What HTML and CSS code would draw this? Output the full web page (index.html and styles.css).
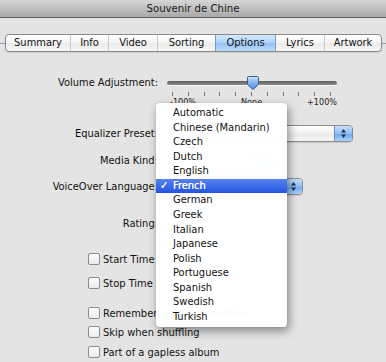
FILE: index.html
```html
<!DOCTYPE html>
<html>
<head>
<meta charset="utf-8">
<link rel="stylesheet" href="styles.css">
</head>
<body>
<div class="window">
  <div class="titlebar">Souvenir de Chine</div>
  <div class="tabrow">
    <div class="stub stub-l"></div>
    <div class="tabs">
      <div class="tab w-summary">Summary</div>
      <div class="tab w-info">Info</div>
      <div class="tab w-video">Video</div>
      <div class="tab w-sorting">Sorting</div>
      <div class="tab tab-sel w-options">Options</div>
      <div class="tab w-lyrics">Lyrics</div>
      <div class="tab w-artwork">Artwork</div>
    </div>
    <div class="stub stub-r"></div>
  </div>

  <div class="content">
    <div class="row-volume">
      <div class="lbl lbl-vol">Volume Adjustment:</div>
      <div class="slider-col">
        <div class="track-area">
          <div class="track"></div>
          <svg class="knob" width="12" height="14" viewBox="0 0 12 14">
            <defs>
              <linearGradient id="kg" x1="0" y1="0" x2="0" y2="1">
                <stop offset="0" stop-color="#cfe4fb"/>
                <stop offset="0.5" stop-color="#7fb2ee"/>
                <stop offset="1" stop-color="#4a8de4"/>
              </linearGradient>
            </defs>
            <path d="M1.5 0.5 H10.5 Q11.5 0.5 11.5 1.5 V8.5 L6 13.5 L0.5 8.5 V1.5 Q0.5 0.5 1.5 0.5 Z" fill="url(#kg)" stroke="#3b5f8f" stroke-width="1"/>
          </svg>
        </div>
        <div class="ticks">
          <i></i><i></i><i></i><i></i><i></i><i></i><i></i><i></i><i></i><i></i><i></i>
        </div>
        <div class="tick-labels">
          <span>-100%</span><span>None</span><span>+100%</span>
        </div>
      </div>
    </div>

    <div class="row row-eq">
      <div class="lbl">Equalizer Preset:</div>
      <div class="popup popup-eq">
        <div class="popup-field"></div>
        <div class="stepper">
          <svg width="7" height="11" viewBox="0 0 7 11"><path d="M3.5 1 L6 4.5 H1 Z M3.5 10 L6 6.5 H1 Z" fill="#1d2f52"/></svg>
        </div>
      </div>
    </div>

    <div class="row row-media">
      <div class="lbl">Media Kind:</div>
      <div class="popup popup-media">
        <div class="popup-field"></div>
        <div class="stepper">
          <svg width="7" height="11" viewBox="0 0 7 11"><path d="M3.5 1 L6 4.5 H1 Z M3.5 10 L6 6.5 H1 Z" fill="#1d2f52"/></svg>
        </div>
      </div>
    </div>

    <div class="row row-voice">
      <div class="lbl">VoiceOver Language:</div>
      <div class="popup popup-voice">
        <div class="popup-field"></div>
        <div class="stepper">
          <svg width="7" height="11" viewBox="0 0 7 11"><path d="M3.5 1 L6 4.5 H1 Z M3.5 10 L6 6.5 H1 Z" fill="#1d2f52"/></svg>
        </div>
      </div>
    </div>

    <div class="row row-rating">
      <div class="lbl">Rating:</div>
    </div>

    <div class="crow row-start"><span class="cb"></span><span>Start Time</span></div>
    <div class="crow row-stop"><span class="cb"></span><span>Stop Time</span></div>
    <div class="crow row-remember"><span class="cb"></span><span>Remember playback position</span></div>
    <div class="crow row-skip"><span class="cb"></span><span>Skip when shuffling</span></div>
    <div class="crow row-part"><span class="cb"></span><span>Part of a gapless album</span></div>
  </div>

  <ul class="menu">
    <li>Automatic</li>
    <li>Chinese (Mandarin)</li>
    <li>Czech</li>
    <li>Dutch</li>
    <li>English</li>
    <li class="sel"><span class="ck">✓</span>French</li>
    <li>German</li>
    <li>Greek</li>
    <li>Italian</li>
    <li>Japanese</li>
    <li>Polish</li>
    <li>Portuguese</li>
    <li>Spanish</li>
    <li>Swedish</li>
    <li>Turkish</li>
  </ul>
</div>
</body>
</html>
```

FILE: styles.css
```css
html, body {
  margin: 0;
  padding: 0;
}
body {
  width: 386px;
  height: 362px;
  overflow: hidden;
  background: #e4e4e4;
  font-family: "DejaVu Sans", "Liberation Sans", sans-serif;
  font-stretch: condensed;
  font-size: 11px;
  color: #111;
}
.window {
  position: relative;
  width: 386px;
  height: 362px;
}
.titlebar {
  height: 17px;
  line-height: 17px;
  text-align: center;
  font-size: 11.3px;
  color: #1a1a1a;
  background: linear-gradient(#d6d6d6, #a8a8a8);
  border-bottom: 1px solid #5f5f5f;
}
.tabrow {
  display: flex;
  align-items: center;
  margin-top: 16px;
  height: 18px;
}
.stub {
  height: 1px;
  background: #9a9a9a;
}
.stub-l { width: 5px; }
.stub-r { flex: 1; }
.tabs {
  display: flex;
  height: 16px;
  border: 1px solid #8a8a8a;
  border-radius: 4px;
  overflow: hidden;
  background: linear-gradient(#ffffff, #f4f4f4 50%, #ebebeb 51%, #f6f6f6);
  box-shadow: 0 1px 1px rgba(0,0,0,0.1);
}
.tab {
  line-height: 16px;
  text-align: center;
  border-left: 1px solid #c9c9c9;
  box-sizing: border-box;
  color: #111;
}
.tab:first-child { border-left: none; }
.tab-sel {
  background: linear-gradient(#d6e9fd, #aed3f8 50%, #93c1f3 51%, #bcdcfb);
  border-left-color: #7d9cc4;
}
.tab-sel + .tab { border-left-color: #7d9cc4; }
.w-summary { width: 64px; }
.w-info { width: 38px; }
.w-video { width: 49px; }
.w-sorting { width: 58px; }
.w-options { width: 60px; }
.w-lyrics { width: 49px; }
.w-artwork { width: 57px; }

.content {
  display: flex;
  flex-direction: column;
}
.lbl {
  width: 158px;
  flex-shrink: 0;
  text-align: right;
  white-space: nowrap;
}
.row-volume {
  display: flex;
  align-items: flex-start;
  margin-top: 24px;
}
.lbl-vol {
  line-height: 14px;
}
.slider-col {
  margin-left: 9px;
  width: 170px;
}
.track-area {
  position: relative;
  height: 14px;
  display: flex;
  align-items: center;
}
.track {
  width: 170px;
  height: 4px;
  border-radius: 2px;
  background: linear-gradient(#5d5d5d, #8d8d8d);
  box-shadow: 0 1px 0 rgba(255,255,255,0.6);
}
.knob {
  position: absolute;
  left: 80px;
  top: 0;
}
.ticks {
  display: flex;
  justify-content: space-between;
  padding: 0 6px 0 5px;
  margin-top: 2px;
  height: 4px;
}
.ticks i {
  display: block;
  width: 1px;
  height: 4px;
  background: #777;
}
.tick-labels {
  display: flex;
  justify-content: space-between;
  font-size: 9px;
  line-height: 10px;
  height: 10px;
  margin-top: 1px;
  padding-left: 3px;
  color: #222;
}
.row {
  display: flex;
  align-items: center;
  height: 17px;
}
.row-eq { margin-top: 18px; }
.row-media { margin-top: 10px; }
.row-voice { margin-top: 9px; }
.row-rating { margin-top: 20px; height: 16px; }
.popup {
  display: flex;
  margin-left: 6px;
  height: 17px;
  border: 1px solid #8d8d8d;
  border-radius: 4px;
  box-sizing: border-box;
  overflow: hidden;
  box-shadow: 0 1px 1px rgba(0,0,0,0.12);
}
.popup-eq { width: 189px; }
.popup-media { width: 110px; }
.popup-voice { width: 139px; }
.popup-field {
  flex: 1;
  background: linear-gradient(#ffffff, #f1f1f1 50%, #e9e9e9 51%, #f7f7f7);
}
.stepper {
  width: 17px;
  display: flex;
  align-items: center;
  justify-content: center;
  border-left: 1px solid #6f8fbf;
  background: linear-gradient(#c8e0fb, #8fbdf1 50%, #6ea9ee 51%, #a8d2fa);
}
.crow {
  display: flex;
  align-items: center;
  height: 16px;
  padding-left: 88px;
  white-space: nowrap;
}
.cb {
  width: 12px;
  height: 12px;
  box-sizing: border-box;
  border: 1px solid #8c8c8c;
  border-radius: 2px;
  background: linear-gradient(#fdfdfd, #ececec);
  margin-right: 3px;
  flex-shrink: 0;
}
.row-start { margin-top: 20px; }
.row-stop { margin-top: 8px; }
.row-remember { margin-top: 14px; }
.row-skip { margin-top: 3px; }
.row-part { margin-top: 4px; }

.menu {
  position: absolute;
  left: 156px;
  top: 103px;
  width: 131px;
  margin: 0;
  padding: 3px 0;
  list-style: none;
  background: rgba(255,255,255,0.975);
  border-radius: 4px;
  box-shadow: 2px 4px 10px rgba(0,0,0,0.42), 0 0 1px rgba(0,0,0,0.3);
}
.menu li {
  height: 14.57px;
  line-height: 14.57px;
  padding-left: 17px;
  white-space: nowrap;
  color: #111;
}
.menu li.sel {
  padding-left: 0;
  color: #fff;
  background: linear-gradient(#5683ef, #2454e2);
  text-shadow: 0 0 0.5px #fff;
}
.ck {
  display: inline-block;
  width: 17px;
  padding-left: 4px;
  box-sizing: border-box;
}
```
